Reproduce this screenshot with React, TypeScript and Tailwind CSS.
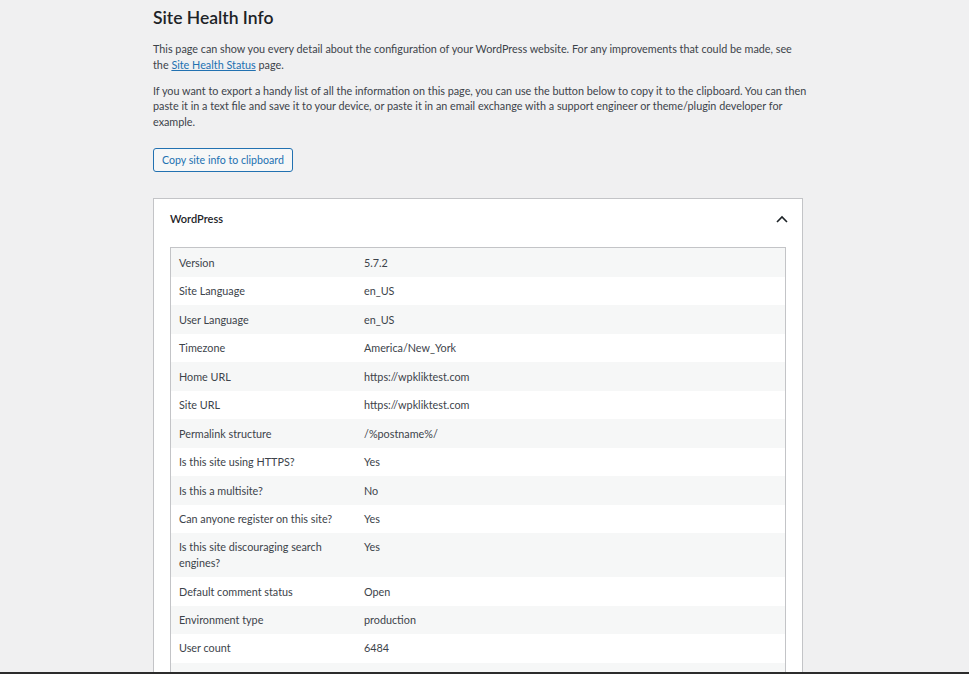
import React from 'react';

const rows: [string, string][] = [
  ['Version', '5.7.2'],
  ['Site Language', 'en_US'],
  ['User Language', 'en_US'],
  ['Timezone', 'America/New_York'],
  ['Home URL', 'https://wpkliktest.com'],
  ['Site URL', 'https://wpkliktest.com'],
  ['Permalink structure', '/%postname%/'],
  ['Is this site using HTTPS?', 'Yes'],
  ['Is this a multisite?', 'No'],
  ['Can anyone register on this site?', 'Yes'],
  ['Is this site discouraging search engines?', 'Yes'],
  ['Default comment status', 'Open'],
  ['Environment type', 'production'],
  ['User count', '6484'],
  ['Communication with WordPress.org', 'WordPress.org is reachable'],
];

export default function App() {
  return (
    <div
      className="flex h-[674px] w-full flex-col overflow-hidden bg-[#f0f0f1] text-[#3c434a]"
      style={{ fontFamily: 'Lato, "Noto Sans", sans-serif' }}
    >
      <div className="flex-1 overflow-hidden pl-[153px]">
        <div className="w-[650px]">
          <h1 className="pt-[7px] text-[17.5px] font-semibold leading-[21px] text-[#1d2327]">Site Health Info</h1>

          <p className="mt-[13px] w-[660px] text-[10.8px] leading-[15.6px]">
            This page can show you every detail about the configuration of your WordPress website. For any improvements that could be made, see the{'\u00a0'}
            <a href="#" className="text-[#2271b1] underline">Site Health Status</a> page.
          </p>
          <p className="mt-[10.4px] w-[660px] text-[10.8px] leading-[15.6px]">
            If you want to export a handy list of all the information on this page, you can use the button below to copy it to the clipboard. You can then paste it in a text file and save it to your device, or paste it in an email exchange with a support engineer or theme/plugin developer for example.
          </p>

          <button className="mt-[19px] h-[24px] rounded-[3px] border border-[#2271b1] bg-[#f6f7f7] px-[8px] text-[10.6px] leading-[22px] text-[#2271b1]">
            Copy site info to clipboard
          </button>

          <div className="mt-[26px] border border-[#c3c4c7] bg-white">
            <div className="flex h-[38px] items-center justify-between pl-[16px] pr-[14px] pt-[1px]">
              <span className="text-[11px] font-semibold text-[#1d2327]">WordPress</span>
              <svg width="12" height="8" viewBox="0 0 12 8" fill="none">
                <path d="M1 7 L6 2 L11 7" stroke="#1d2327" strokeWidth="1.6" />
              </svg>
            </div>
            <div className="px-[16px] pb-[16px] pt-[10px]">
              <div className="border border-[#c3c4c7]">
                {rows.map(([label, value], i) => (
                  <div
                    key={label}
                    className={`flex py-[6.45px] text-[10.8px] leading-[15.6px] ${i % 2 === 0 ? 'bg-[#f6f7f7]' : 'bg-white'}`}
                  >
                    <div className="w-[185px] shrink-0 pl-[8px] pr-[10px]">{label}</div>
                    <div className="pl-[8px]">{value}</div>
                  </div>
                ))}
              </div>
            </div>
          </div>
        </div>
      </div>
      <div className="h-[2px] w-full bg-[#2c2c2c]" />
    </div>
  );
}
